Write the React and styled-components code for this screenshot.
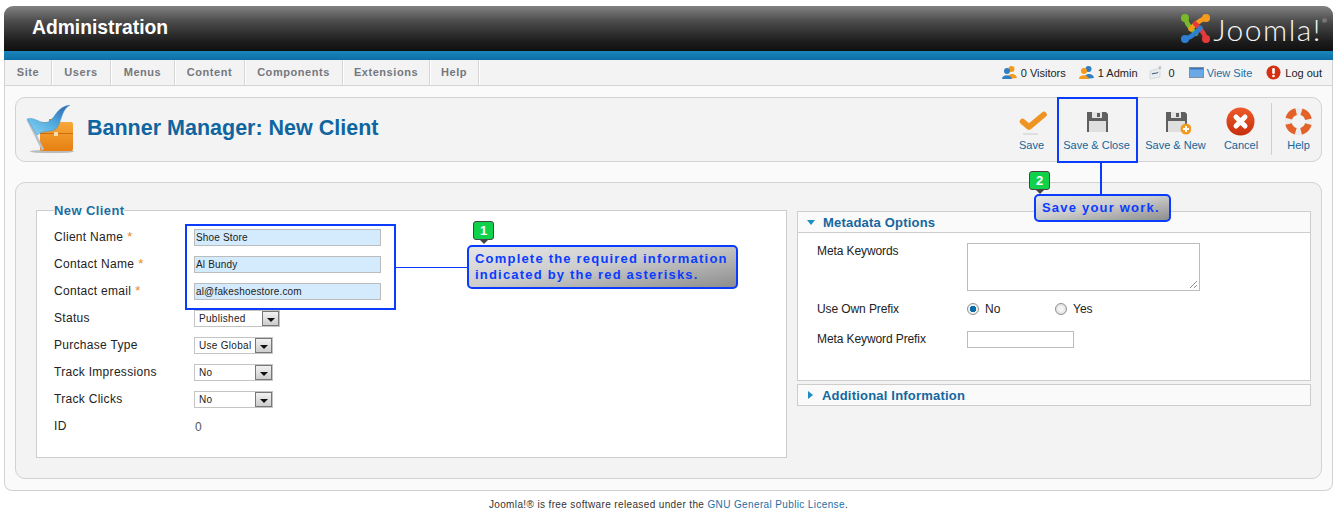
import React from 'react';
import styled, { createGlobalStyle } from 'styled-components';

const Global = createGlobalStyle`
    html, body { margin: 0; padding: 0; background: #fff; height: 515px; overflow: hidden; }
    body { font-family: "Liberation Sans", Arial, sans-serif; font-size: 12px; color: #222; }
`;

const Page = styled.div`
    position: relative;
    width: 1341px;
    height: 515px;
    box-sizing: border-box;
    padding: 6px 8px 0 4px;
`;

const Frame = styled.div`
    height: 485px;
    box-sizing: border-box;
    background: #fafafa;
    border: 1px solid #d2d2d2;
    border-top: none;
    border-radius: 10px 10px 8px 8px;
`;

const Header = styled.header`
    display: flex;
    align-items: center;
    justify-content: space-between;
    height: 45px;
    margin: 0 -1px;
    padding: 0 6px 0 28px;
    background: linear-gradient(#828282, #4a4a4a 35%, #1c1c1c 80%, #101010);
    border-radius: 9px 9px 0 0;
`;

const Brand = styled.h1`
    margin: 0;
    font-size: 19.3px;
    font-weight: bold;
    color: #fff;
    padding-bottom: 2px;
`;

const Logo = styled.div`
    display: flex;
    align-items: center;
    gap: 2px;
    color: #f4f4f4;
    font-family: Lato, sans-serif;
    font-weight: 300;
    font-size: 30px;
    letter-spacing: 1.5px;
    line-height: 1;
    sup { font-size: 6px; align-self: flex-start; margin: 5px 0 0 -2px; letter-spacing: 0; }
`;

const Strip = styled.div`
    height: 9px;
    margin: 0 -1px;
    background: linear-gradient(#1b86bd, #0b6ea5);
`;

const MenuBar = styled.nav`
    display: flex;
    justify-content: space-between;
    align-items: stretch;
    height: 26px;
    box-sizing: border-box;
    background: #f3f3f3;
    border-bottom: 1px solid #d4d4d4;
`;

const Menu = styled.ul`
    display: flex;
    margin: 0;
    padding: 0;
    list-style: none;
`;

const MenuItem = styled.li`
    display: flex;
    align-items: center;
    box-sizing: border-box;
    width: ${p => p.$w}px;
    justify-content: center;
    padding-bottom: 2px;
    border-right: 1px solid #d6d6d6;
    box-shadow: 1px 0 0 #fff;
    font-size: 11px;
    font-weight: bold;
    letter-spacing: 0.55px;
    color: #74787e;
`;

const Status = styled.div`
    display: flex;
    align-items: center;
    padding-right: 10px;
    font-size: 11px;
    color: #222;
`;

const StatusItem = styled.span`
    display: flex;
    align-items: center;
    gap: ${p => p.$gap ?? 4}px;
    margin-left: ${p => p.$ml ?? 14}px;
    color: ${p => (p.$link ? '#1c6fa5' : '#222')};
`;

const Content = styled.div`
    padding: 11px 10px 0;
`;

const Toolbar = styled.div`
    display: flex;
    align-items: center;
    justify-content: space-between;
    height: 65px;
    box-sizing: border-box;
    padding: 0 12px 0 10px;
    background: #f3f3f3;
    border: 1px solid #d2d2d2;
    border-radius: 10px;
`;

const TitleWrap = styled.div`
    display: flex;
    align-items: center;
    gap: 13px;
`;

const Title = styled.h2`
    margin: 0;
    font-size: 21.5px;
    font-weight: bold;
    color: #0f659f;
    padding-bottom: 3px;
`;

const Actions = styled.div`
    display: flex;
    align-items: flex-start;
    gap: 18px;
`;

const Action = styled.div`
    display: flex;
    flex-direction: column;
    align-items: center;
    gap: 3px;
    padding-top: 2px;
    width: ${p => p.$w}px;
    font-size: 11px;
    color: #12659b;
    white-space: nowrap;
    svg { display: block; }
`;

const Divider = styled.div`
    width: 1px;
    height: 52px;
    background: #cfcfcf;
    margin: -1px -2px 0 -5px;
`;

const Panel = styled.div`
    display: grid;
    grid-template-columns: 751px 514px;
    column-gap: 10px;
    align-items: start;
    height: 297px;
    box-sizing: border-box;
    margin-top: 20px;
    padding: 21px 10px 0 20px;
    background: #f3f3f3;
    border: 1px solid #d2d2d2;
    border-radius: 10px;
`;

const Fieldset = styled.fieldset`
    margin: -2px 0 0;
    padding: 0 0 0 17px;
    height: 256px;
    box-sizing: border-box;
    background: #fff;
    border: 1px solid #cdcdcd;
`;

const Legend = styled.legend`
    padding: 2px 0 0;
    font-size: 13px;
    font-weight: bold;
    letter-spacing: 0.4px;
    color: #1d6ea3;
    line-height: 14px;
`;

const FormGrid = styled.div`
    display: grid;
    grid-template-columns: 140px 1fr;
    grid-auto-rows: 27px;
    align-items: center;
    margin-top: 6px;
`;

const Label = styled.label`
    font-size: 12px;
    letter-spacing: 0.3px;
    color: #222;
    padding-bottom: 2px;
`;

const Star = styled.span`
    color: #e8881e;
    font-size: 13px;
    margin-left: 4px;
`;

const TextInput = styled.div`
    width: ${p => p.$w}px;
    height: 17px;
    box-sizing: border-box;
    padding-left: 1px;
    border: 1px solid #bcbcbc;
    background: ${p => (p.$filled ? '#d4ebfd' : '#fff')};
    font-size: 10px;
    letter-spacing: 0.17px;
    line-height: 15px;
    color: #222;
`;

const PrefixInput = styled(TextInput)`
    margin-top: 5px;
`;

const Select = styled.div`
    display: flex;
    justify-content: space-between;
    align-items: stretch;
    width: ${p => p.$w}px;
    height: 17px;
    box-sizing: border-box;
    border: 1px solid #c4c4c4;
    background: #fff;
    font-size: 10px;
    letter-spacing: 0.3px;
    line-height: 15px;
    padding-left: 4px;
    color: #222;
`;

const SelectButton = styled.span`
    display: flex;
    align-items: center;
    justify-content: center;
    width: 17px;
    box-sizing: border-box;
    background: linear-gradient(#f2f2f2, #cdcdcd);
    border: 1px solid #777;
    &::after {
        content: "";
        margin-top: 3px;
        border-top: 4px solid #111;
        border-left: 4px solid transparent;
        border-right: 4px solid transparent;
    }
`;

const Value = styled.span`
    font-size: 12px;
    color: #555;
    padding-left: 1px;
`;

const Side = styled.div`
    display: flex;
    flex-direction: column;
    gap: 3px;
    margin-top: 7px;
`;

const Pane = styled.section`
    box-sizing: border-box;
    background: #fff;
    border: 1px solid #cdcdcd;
`;

const PaneHead = styled.h3`
    display: flex;
    align-items: center;
    gap: 8px;
    margin: 0;
    height: ${p => (p.$open ? 21 : 20)}px;
    box-sizing: border-box;
    padding-left: 9px;
    background: #fafafa;
    font-size: 13px;
    font-weight: bold;
    letter-spacing: 0.2px;
    color: #14679e;
    border-bottom: ${p => (p.$open ? '1px solid #cdcdcd' : 'none')};
`;

const Caret = styled.span`
    width: 0;
    height: 0;
    ${p => p.$open
        ? 'border-top: 5px solid #1c8fc0; border-left: 4px solid transparent; border-right: 4px solid transparent;'
        : 'border-left: 5px solid #1c8fc0; border-top: 4px solid transparent; border-bottom: 4px solid transparent; margin: 0 1px 0 1px;'}
`;

const PaneBody = styled.div`
    display: grid;
    grid-template-columns: 150px 1fr;
    height: 147px;
    box-sizing: border-box;
    padding: 10px 0 0 19px;
    grid-template-rows: 48px 35px 24px;
    row-gap: 0;
`;

const TopLabel = styled(Label)`
    letter-spacing: -0.1px;
    padding-bottom: 0;
    padding-top: ${p => p.$top || 0}px;
`;

const TextArea = styled.div`
    position: relative;
    width: 233px;
    height: 48px;
    box-sizing: border-box;
    border: 1px solid #bcbcbc;
    background: #fff;
    svg { position: absolute; right: 1px; bottom: 1px; }
`;

const Radios = styled.div`
    display: grid;
    grid-template-columns: 88px 60px;
    align-items: center;
    padding-top: 10px;
    height: 15px;
`;

const Radio = styled.span`
    display: flex;
    align-items: center;
    gap: 6px;
    font-size: 12px;
    &::before {
        content: "";
        width: 12px;
        height: 12px;
        box-sizing: border-box;
        border-radius: 50%;
        border: 1px solid #8f8f8f;
        background: ${p => (p.$on
            ? 'radial-gradient(circle, #0b6aa8 0 3px, #eef2f5 3.5px)'
            : 'radial-gradient(circle, #f4f4f4 0 2px, #d4d4d4)')};
    }
`;

const Footer = styled.footer`
    margin-top: 8px;
    text-align: center;
    font-size: 10px;
    letter-spacing: 0.37px;
    color: #333;
    a { color: #1c6fa5; text-decoration: none; }
`;

/* tutorial marks laid over the screenshot */
const Outline = styled.div`
    position: absolute;
    left: ${p => p.$x}px;
    top: ${p => p.$y}px;
    width: ${p => p.$w}px;
    height: ${p => p.$h}px;
    box-sizing: border-box;
    border: 2px solid #0a3cff;
`;

const Leader = styled.div`
    position: absolute;
    left: ${p => p.$x}px;
    top: ${p => p.$y}px;
    width: ${p => p.$w}px;
    height: ${p => p.$h}px;
    background: #0a3cff;
`;

const Callout = styled.div`
    position: absolute;
    left: ${p => p.$x}px;
    top: ${p => p.$y}px;
    width: ${p => p.$w}px;
    height: ${p => p.$h}px;
    box-sizing: border-box;
    padding: 4px 0 0 6px;
    border: 2px solid #0a3cff;
    border-radius: 5px;
    background: linear-gradient(170deg, #e6e6e6, #cdcdcd 45%, #8d8d8d);
    font-size: 13px;
    font-weight: bold;
    line-height: 16px;
    letter-spacing: 1.2px;
    color: #0a3cff;
    white-space: nowrap;
`;

const Badge = styled.div`
    position: absolute;
    left: ${p => p.$x}px;
    top: ${p => p.$y}px;
    width: 21px;
    height: 19px;
    box-sizing: border-box;
    border: 1px solid #444;
    border-radius: 3px;
    background: #0fd24a;
    color: #fff;
    font-size: 13px;
    font-weight: bold;
    line-height: 17px;
    text-align: center;
    &::after {
        content: "";
        position: absolute;
        left: 5px;
        top: 17px;
        border-top: 5px solid #444;
        border-left: 5px solid transparent;
        border-right: 5px solid transparent;
    }
`;

const JoomlaMark = () => (
    <svg width="31" height="31" viewBox="0 0 31 31" fill="none" strokeLinecap="round" strokeLinejoin="round" strokeWidth="4.6">
        {['#7ab92c', '#f39a1f', '#e63a3a', '#2f7fd0'].map((color, i) => (
            <g key={color} transform={`rotate(${i * 90} 15.5 15.5)`}>
                <path d="M5 5 Q7 11 10.5 15 L16 20.5" stroke={color} />
                <circle cx="5" cy="5" r="4" fill={color} />
            </g>
        ))}
    </svg>
);

const PageIcon = () => (
    <svg width="48" height="50" viewBox="0 0 48 50">
        <defs>
            <linearGradient id="flag" x1="0" y1="1" x2="1" y2="0">
                <stop offset="0" stopColor="#8fd8f4" />
                <stop offset="0.55" stopColor="#4aa5dc" />
                <stop offset="1" stopColor="#2c5da8" />
            </linearGradient>
            <linearGradient id="brief" x1="0" y1="0" x2="0" y2="1">
                <stop offset="0" stopColor="#f7a83a" />
                <stop offset="1" stopColor="#e77f12" />
            </linearGradient>
        </defs>
        <ellipse cx="26" cy="46.5" rx="22" ry="1.6" fill="#bbb" />
        <path d="M24 18 v-3 h9 v3" fill="none" stroke="#e58a1c" strokeWidth="2" />
        <rect x="14" y="17" width="33" height="29" rx="2" fill="url(#brief)" />
        <rect x="14" y="28" width="33" height="1" fill="#c96f10" />
        <rect x="28" y="27" width="4" height="4" fill="#f4dcae" />
        <path d="M2 15 L17 45" stroke="#b9c0c6" strokeWidth="2.6" />
        <path d="M1 14 C8 11 15 20 22 17 C30 13 30 2 44 0 C36 4 36 14 32 21 C28 29 18 24 11 30 Z" fill="url(#flag)" stroke="#3b8fcc" strokeWidth="0.5" />
    </svg>
);

const Check = () => (
    <svg width="30" height="30" viewBox="0 0 30 30">
        <path d="M5.5 15.5 L12 21 L27 8.5" fill="none" stroke="#ef9423" strokeWidth="5.6" strokeLinecap="round" strokeLinejoin="round" />
        <rect x="6" y="27.5" width="15" height="1" fill="#ccc" />
    </svg>
);

const Floppy = ({ plus }) => (
    <svg width="30" height="30" viewBox="0 0 30 30">
        <path d="M5 6 H24 L26 8 V26 H5 Z" fill="#5f5f5f" />
        <rect x="10" y="6" width="10" height="6" fill="#e4e4e4" />
        <rect x="15" y="7" width="3" height="4" fill="#5f5f5f" />
        <rect x="7" y="15" width="17" height="11" fill="#dfdfdf" />
        {plus && (
            <g>
                <circle cx="25" cy="23" r="5.5" fill="#f59a21" />
                <path d="M25 20 V26 M22 23 H28" stroke="#fff" strokeWidth="2" />
            </g>
        )}
    </svg>
);

const Cancel = () => (
    <svg width="30" height="30" viewBox="0 0 30 30">
        <defs>
            <linearGradient id="cancel" x1="0" y1="0" x2="0" y2="1">
                <stop offset="0" stopColor="#ee5a2a" />
                <stop offset="1" stopColor="#c62f0c" />
            </linearGradient>
        </defs>
        <circle cx="14.5" cy="15.5" r="14" fill="url(#cancel)" />
        <path d="M10 11 L19 20 M19 11 L10 20" stroke="#fff" strokeWidth="5" strokeLinecap="round" />
    </svg>
);

const Lifebuoy = () => (
    <svg width="30" height="30" viewBox="0 0 30 30">
        <circle cx="14.5" cy="15.5" r="10.2" fill="none" stroke="#ececec" strokeWidth="6.8" />
        <circle cx="14.5" cy="15.5" r="10.2" fill="none" stroke="#e2622a" strokeWidth="6.8" strokeDasharray="10.5 5.52" strokeDashoffset="-2.76" />
    </svg>
);

const Users = ({ head, body }) => (
    <svg width="15" height="15" viewBox="0 0 15 15">
        <circle cx="9.5" cy="4" r="3" fill={body} />
        <path d="M5 14 C5 8 14 7 15 13 Z" fill={body} />
        <circle cx="5" cy="6" r="3" fill={head} />
        <path d="M0 14 C0 9 9 9 10 14 Z" fill={head} />
    </svg>
);

const Mail = () => (
    <svg width="13" height="14" viewBox="0 0 13 14">
        <path d="M1 5 L11 2 V11 L1 13 Z" fill="#e9eef1" stroke="#c2c9cc" strokeWidth="0.6" />
        <path d="M3 8 C5 6 7 9 9 6" fill="none" stroke="#55708a" strokeWidth="1.2" />
        <circle cx="11" cy="1.5" r="1" fill="none" stroke="#7a8b99" strokeWidth="0.5" />
    </svg>
);

const Monitor = () => (
    <svg width="15" height="11" viewBox="0 0 15 11">
        <rect x="0.5" y="0.5" width="14" height="10" fill="#6aa9e8" stroke="#7f8f9c" />
        <rect x="1" y="1" width="13" height="1.5" fill="#3a75bd" />
    </svg>
);

const Logout = () => (
    <svg width="15" height="15" viewBox="0 0 15 15">
        <circle cx="7.5" cy="7.5" r="7" fill="#d5300f" />
        <rect x="6.2" y="3" width="2.6" height="6" rx="1.2" fill="#fff" />
        <circle cx="7.5" cy="11" r="1.3" fill="#fff" />
    </svg>
);

const menu = [['Site', 47], ['Users', 59], ['Menus', 64], ['Content', 70], ['Components', 98], ['Extensions', 87], ['Help', 49]];

const fields = [
    ['Client Name', 'Shoe Store'],
    ['Contact Name', 'Al Bundy'],
    ['Contact email', 'al@fakeshoestore.com'],
];

const selects = [
    ['Status', 'Published', 86],
    ['Purchase Type', 'Use Global', 79],
    ['Track Impressions', 'No', 79],
    ['Track Clicks', 'No', 79],
];

export default function App() {
    return (
        <Page>
            <Global />
            <Frame>
                <Header>
                    <Brand>Administration</Brand>
                    <Logo>
                        <JoomlaMark />
                        Joomla!<sup>®</sup>
                    </Logo>
                </Header>
                <Strip />
                <MenuBar>
                    <Menu>
                        {menu.map(([name, w]) => <MenuItem key={name} $w={w}>{name}</MenuItem>)}
                    </Menu>
                    <Status>
                        <StatusItem><Users head="#2f7fc4" body="#f39a1f" />0 Visitors</StatusItem>
                        <StatusItem $ml={13}><Users head="#f39a1f" body="#2f7fc4" />1 Admin</StatusItem>
                        <StatusItem $ml={11} $gap={7}><Mail />0</StatusItem>
                        <StatusItem $gap={3} $link><Monitor />View Site</StatusItem>
                        <StatusItem><Logout />Log out</StatusItem>
                    </Status>
                </MenuBar>
                <Content>
                    <Toolbar>
                        <TitleWrap>
                            <PageIcon />
                            <Title>Banner Manager: New Client</Title>
                        </TitleWrap>
                        <Actions>
                            <Action $w={33}><Check />Save</Action>
                            <Action $w={61}><Floppy />Save &amp; Close</Action>
                            <Action $w={61}><Floppy plus />Save &amp; New</Action>
                            <Action $w={34}><Cancel />Cancel</Action>
                            <Divider />
                            <Action $w={21}><Lifebuoy />Help</Action>
                        </Actions>
                    </Toolbar>
                    <Panel>
                        <Fieldset>
                            <Legend>New Client</Legend>
                            <FormGrid>
                                {fields.map(([label, value]) => (
                                    <React.Fragment key={label}>
                                        <Label>{label}<Star>*</Star></Label>
                                        <TextInput $w={187} $filled>{value}</TextInput>
                                    </React.Fragment>
                                ))}
                                {selects.map(([label, value, w]) => (
                                    <React.Fragment key={label}>
                                        <Label>{label}</Label>
                                        <Select $w={w}>{value}<SelectButton /></Select>
                                    </React.Fragment>
                                ))}
                                <Label>ID</Label>
                                <Value>0</Value>
                            </FormGrid>
                        </Fieldset>
                        <Side>
                            <Pane>
                                <PaneHead $open><Caret $open />Metadata Options</PaneHead>
                                <PaneBody>
                                    <TopLabel $top={1}>Meta Keywords</TopLabel>
                                    <TextArea>
                                        <svg width="9" height="9" viewBox="0 0 9 9">
                                            <path d="M1 8 L8 1 M5 8 L8 5" stroke="#777" strokeWidth="0.8" />
                                        </svg>
                                    </TextArea>
                                    <TopLabel $top={11}>Use Own Prefix</TopLabel>
                                    <Radios>
                                        <Radio $on>No</Radio>
                                        <Radio>Yes</Radio>
                                    </Radios>
                                    <TopLabel $top={6}>Meta Keyword Prefix</TopLabel>
                                    <PrefixInput $w={107} />
                                </PaneBody>
                            </Pane>
                            <Pane>
                                <PaneHead><Caret />Additional Information</PaneHead>
                            </Pane>
                        </Side>
                    </Panel>
                </Content>
            </Frame>
            <Footer>
                Joomla!® is free software released under the <a href="#gpl">GNU General Public License</a>.
            </Footer>

            <Outline $x={185} $y={224} $w={211} $h={86} />
            <Leader $x={396} $y={267} $w={71} $h={1} />
            <Callout $x={467} $y={245} $w={271} $h={44}>
                Complete the required information<br />indicated by the red asterisks.
            </Callout>
            <Badge $x={473} $y={221}>1</Badge>

            <Outline $x={1057} $y={97} $w={81} $h={66} />
            <Leader $x={1100} $y={163} $w={2} $h={32} />
            <Callout $x={1034} $y={194} $w={137} $h={28}>Save your work.</Callout>
            <Badge $x={1029} $y={171}>2</Badge>
        </Page>
    );
}
